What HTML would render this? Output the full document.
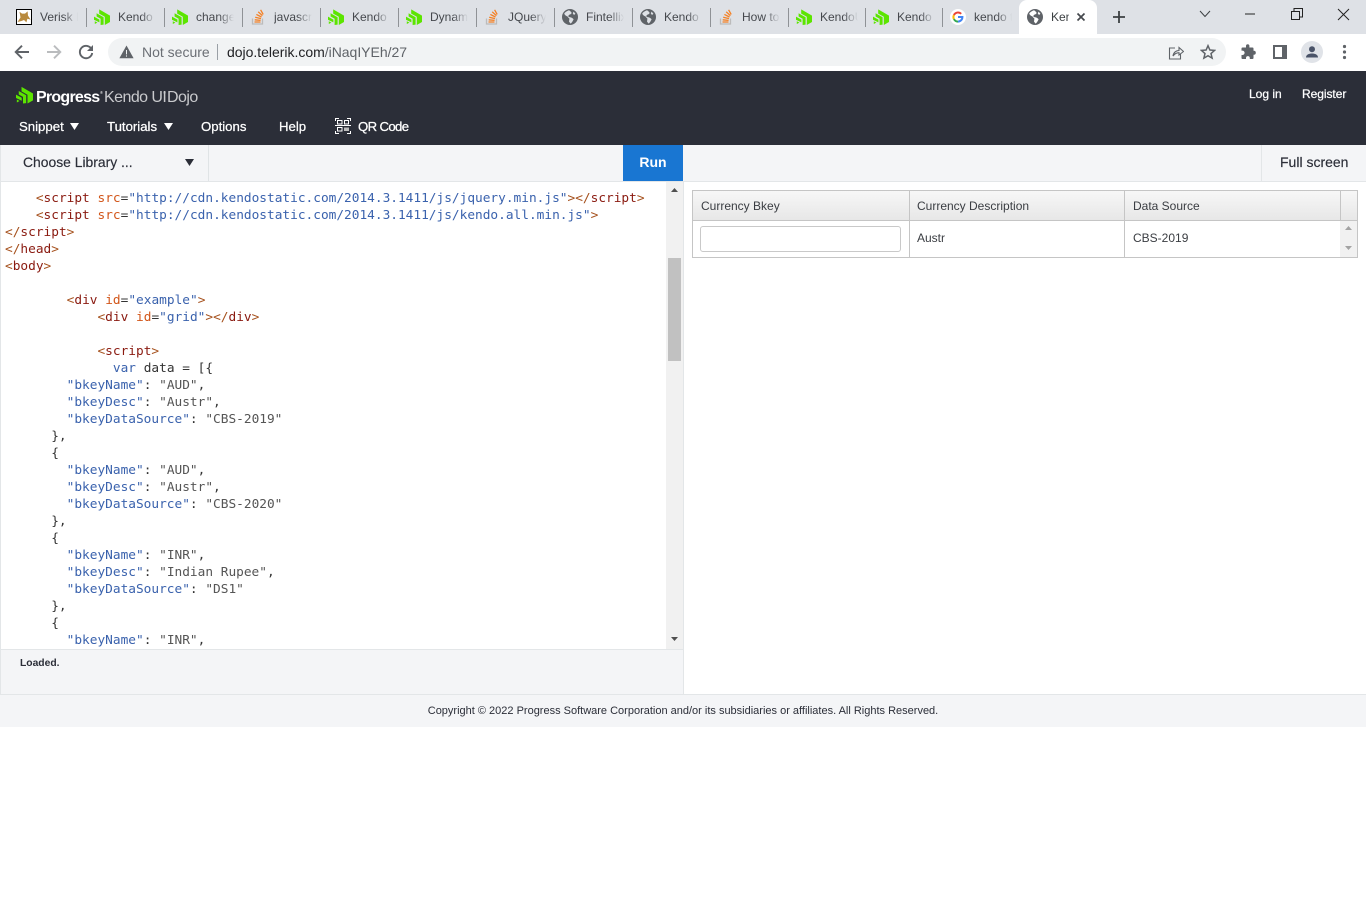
<!DOCTYPE html>
<html><head><meta charset="utf-8"><title>Kendo UI Dojo</title>
<style>
*{box-sizing:border-box}
html,body{margin:0;padding:0;width:1366px;height:900px;overflow:hidden;background:#fff;font-family:"Liberation Sans",Arial,sans-serif}
.a{position:absolute;white-space:nowrap}
.tab{position:absolute;top:0;height:34px;width:78px}
.tab svg{position:absolute;left:8px;top:9px;width:16px;height:16px}
.tab span{position:absolute;left:32px;top:9px;width:38px;overflow:hidden;font-size:12px;line-height:16px;color:#45484d;white-space:nowrap;-webkit-mask-image:linear-gradient(90deg,#000 60%,transparent);mask-image:linear-gradient(90deg,#000 60%,transparent)}
.sep{position:absolute;top:8px;width:1px;height:19px;background:#8f9296}
.nav{position:absolute;top:119px;font-size:13.2px;line-height:16px;color:#fff;-webkit-text-stroke:.25px #fff;white-space:nowrap}
.code{position:absolute;left:5px;top:190px;font:12.8px/17px "DejaVu Sans Mono","Liberation Mono",monospace;white-space:pre;color:#333;margin:0}
.t{color:#8a1a10}.b{color:#a5501c}.at{color:#d2561a}.s{color:#3a62ad}.v{color:#555}
.cell{position:absolute;font-size:12px;line-height:14px;color:#3a3d42;white-space:nowrap}
</style></head><body>
<svg width="0" height="0" style="position:absolute">
<symbol id="pg" viewBox="0 0 16 16"><path fill="#5ce500" d="M5.2 0.4 16 6.6V13L10.8 16V7.8L5.2 4.6Z M2.6 4.2 9.6 8.2V15.6L6.6 16V9.8L2.6 7.5Z M0 7.6 5.4 10.6V13.4L0 10.8Z M0.8 12.2 3.4 13.6 0.8 15Z"/></symbol>
<symbol id="so" viewBox="0 0 16 16"><path fill="none" stroke="#bcbbbb" stroke-width="1.3" d="M2.5 9.5V15H12.5V9.5"/><path fill="none" stroke="#f48024" stroke-width="1.3" d="M4.5 13H10.5M4.7 10.8 10.6 11.4M5.2 8.2 11 9.6M6.4 5.4 11.5 8M8.2 2.8 12.4 6.6M10.6 .8 13.2 5.4"/></symbol>
<symbol id="gl" viewBox="0 0 16 16"><circle cx="8" cy="8" r="8" fill="#5f6368"/><path fill="#dee1e6" d="M7 1.2C5 2 3.2 3 2.2 4.6 2.8 6 4 7 5.4 7.4 6.2 8.6 6.8 9 7.4 9.6L7 12.6 8.6 14.6C10 13.8 10.8 11.8 11.6 10.4 10.8 8.8 8.4 8.2 6.8 8 6 7 6.6 6 7.6 5.6 8.4 5.4 9.6 5 9.6 3.8 9 2.6 8 1.8 7 1.2Z"/><path fill="#dee1e6" d="M11.6 2.6 13.4 4.8 12 6 10.8 4.4Z"/></symbol>
</svg>

<!-- tab strip -->
<div class="a" style="left:0;top:0;width:1366px;height:34px;background:#dee1e6"></div>
<div class="tab" style="left:8px"><svg viewBox="0 0 16 16"><rect x=".5" y=".5" width="15" height="15" fill="#fff" stroke="#000"/><path fill="#b98a3e" d="M1.5 13 4.5 8.5 3.5 2.8 6 4.6 9 4.6 11.6 2.4 12 6.6 14.6 10.6 11.4 9.8 10.4 13.4 8 11 5.5 12Z"/></svg><span>Verisk F</span></div>
<div class="sep" style="left:86px"></div>
<div class="tab" style="left:86px"><svg viewBox="0 0 16 16"><use href="#pg"/></svg><span>Kendo U</span></div>
<div class="sep" style="left:164px"></div>
<div class="tab" style="left:164px"><svg viewBox="0 0 16 16"><use href="#pg"/></svg><span>change</span></div>
<div class="sep" style="left:242px"></div>
<div class="tab" style="left:242px"><svg viewBox="0 0 16 16"><use href="#so"/></svg><span>javascri</span></div>
<div class="sep" style="left:320px"></div>
<div class="tab" style="left:320px"><svg viewBox="0 0 16 16"><use href="#pg"/></svg><span>Kendo U</span></div>
<div class="sep" style="left:398px"></div>
<div class="tab" style="left:398px"><svg viewBox="0 0 16 16"><use href="#pg"/></svg><span>Dynam</span></div>
<div class="sep" style="left:476px"></div>
<div class="tab" style="left:476px"><svg viewBox="0 0 16 16"><use href="#so"/></svg><span>JQuery</span></div>
<div class="sep" style="left:554px"></div>
<div class="tab" style="left:554px"><svg viewBox="0 0 16 16"><use href="#gl"/></svg><span>Fintellix</span></div>
<div class="sep" style="left:632px"></div>
<div class="tab" style="left:632px"><svg viewBox="0 0 16 16"><use href="#gl"/></svg><span>Kendo U</span></div>
<div class="sep" style="left:710px"></div>
<div class="tab" style="left:710px"><svg viewBox="0 0 16 16"><use href="#so"/></svg><span>How to</span></div>
<div class="sep" style="left:788px"></div>
<div class="tab" style="left:788px"><svg viewBox="0 0 16 16"><use href="#pg"/></svg><span>KendoU</span></div>
<div class="sep" style="left:865px"></div>
<div class="tab" style="left:865px"><svg viewBox="0 0 16 16"><use href="#pg"/></svg><span>Kendo U</span></div>
<div class="sep" style="left:942px"></div>
<div class="tab" style="left:942px"><svg viewBox="0 0 16 16"><circle cx="8" cy="8" r="8" fill="#fff"/><path fill="none" stroke="#4285f4" stroke-width="2" d="M8 8H12.4A4.5 4.5 0 0 1 8 12.6"/><path fill="none" stroke="#34a853" stroke-width="2" d="M8 12.6A4.6 4.6 0 0 1 3.9 10"/><path fill="none" stroke="#fbbc05" stroke-width="2" d="M3.9 10A4.6 4.6 0 0 1 3.9 6"/><path fill="none" stroke="#ea4335" stroke-width="2" d="M3.9 6A4.6 4.6 0 0 1 11.2 4.8"/></svg><span>kendo t</span></div>

<!-- active tab -->
<div class="a" style="left:1019px;top:0;width:78px;height:34px;background:#fff;border-radius:8px 8px 0 0"></div>
<svg class="a" style="left:1027px;top:9px" width="16" height="16" viewBox="0 0 16 16"><circle cx="8" cy="8" r="8" fill="#5f6368"/><path fill="#fff" d="M7 1.2C5 2 3.2 3 2.2 4.6 2.8 6 4 7 5.4 7.4 6.2 8.6 6.8 9 7.4 9.6L7 12.6 8.6 14.6C10 13.8 10.8 11.8 11.6 10.4 10.8 8.8 8.4 8.2 6.8 8 6 7 6.6 6 7.6 5.6 8.4 5.4 9.6 5 9.6 3.8 9 2.6 8 1.8 7 1.2Z"/><path fill="#fff" d="M11.6 2.6 13.4 4.8 12 6 10.8 4.4Z"/></svg>
<div class="a" style="left:1051px;top:9px;width:18px;overflow:hidden;font-size:12px;line-height:16px;color:#3c4043">Kendo</div>
<svg class="a" style="left:1076px;top:12px" width="10" height="10" viewBox="0 0 10 10"><path d="M1.5 1.5 8.5 8.5M8.5 1.5 1.5 8.5" stroke="#45484d" stroke-width="1.7" fill="none"/></svg>
<svg class="a" style="left:1112px;top:10px" width="14" height="14" viewBox="0 0 14 14"><path d="M7 1V13M1 7H13" stroke="#3c4043" stroke-width="1.8" fill="none"/></svg>
<svg class="a" style="left:1199px;top:9px" width="12" height="10" viewBox="0 0 12 10"><path d="M1 2 6 7.5 11 2" stroke="#3c4043" stroke-width="1" fill="none"/></svg>
<svg class="a" style="left:1244px;top:9px" width="12" height="10" viewBox="0 0 12 10"><path d="M1 5H11" stroke="#222" stroke-width="1"/></svg>
<svg class="a" style="left:1291px;top:8px" width="12" height="12" viewBox="0 0 12 12"><path d="M.5 3.5H8.5V11.5H.5ZM3 3.5V.5H11.5V9H8.5" stroke="#222" fill="none"/></svg>
<svg class="a" style="left:1337px;top:8px" width="13" height="13" viewBox="0 0 13 13"><path d="M1 1 12 12M12 1 1 12" stroke="#222" fill="none"/></svg>

<!-- toolbar -->
<div class="a" style="left:0;top:34px;width:1366px;height:37px;background:#fff"></div>
<svg class="a" style="left:14px;top:44px" width="16" height="16" viewBox="0 0 16 16"><path d="M15 8H2M8 1.7 1.7 8 8 14.3" stroke="#5f6368" stroke-width="1.9" fill="none"/></svg>
<svg class="a" style="left:46px;top:44px" width="16" height="16" viewBox="0 0 16 16"><path d="M1 8H14M8 1.7 14.3 8 8 14.3" stroke="#babcbe" stroke-width="1.9" fill="none"/></svg>
<svg class="a" style="left:78px;top:44px" width="16" height="16" viewBox="0 0 16 16"><path d="M13.6 5.2A6.2 6.2 0 1 0 14.2 9" stroke="#5f6368" stroke-width="1.9" fill="none"/><path d="M15 1V7H9Z" fill="#5f6368"/></svg>
<div class="a" style="left:108px;top:38px;width:1118px;height:28px;background:#f1f3f4;border-radius:14px"></div>
<svg class="a" style="left:119px;top:45px" width="15" height="14" viewBox="0 0 15 14"><path d="M7.5 .5 14.6 13.2H.4Z" fill="#5f6368"/><path d="M7 5H8V9.4H7ZM7 10.4H8V11.6H7Z" fill="#f1f3f4"/></svg>
<div class="a" style="left:142px;top:44px;font-size:14px;line-height:17px;color:#6b6f75">Not secure</div>
<div class="a" style="left:217px;top:44px;width:1px;height:16px;background:#9aa0a6"></div>
<div class="a" style="left:227px;top:44px;font-size:14px;line-height:17px;color:#202124;letter-spacing:-.02px">dojo.telerik.com<span style="color:#5f6368">/iNaqIYEh/27</span></div>
<svg class="a" style="left:1168px;top:44px" width="16" height="16" viewBox="0 0 16 16"><path d="M7 4H1.5V15H12.5V10" stroke="#5f6368" fill="none" stroke-width="1.1"/><path d="M5 12C5.5 8.5 8 6.5 11 6.5V3.5L15.5 7.5 11 11V8.7C8.5 8.7 6.5 10 5 12Z" stroke="#5f6368" fill="none" stroke-width="1.1"/></svg>
<svg class="a" style="left:1200px;top:44px" width="16" height="16" viewBox="0 0 16 16"><path d="M8 1.7 9.9 6 14.6 6.4 11 9.5 12.1 14.1 8 11.7 3.9 14.1 5 9.5 1.4 6.4 6.1 6Z" stroke="#5f6368" stroke-width="1.5" fill="none"/></svg>
<svg class="a" style="left:1240px;top:44px" width="16" height="16" viewBox="0 0 16 16"><path d="M6 1.5A1.8 1.8 0 0 1 9.4 1.5V3.5H12.5A1 1 0 0 1 13.5 4.5V6.8H13.8A2 2 0 0 1 13.8 10.8H13.5V14A1 1 0 0 1 12.5 15H9.8V14A1.9 1.9 0 0 0 6 14V15H2.5A1 1 0 0 1 1.5 14V11H2.4A2.2 2.2 0 0 0 2.4 6.6H1.5V4.5A1 1 0 0 1 2.5 3.5H6Z" fill="#5f6368"/></svg>
<svg class="a" style="left:1273px;top:45px" width="14" height="14" viewBox="0 0 14 14"><path d="M0 0H14V14H0ZM2 2V12H9V2Z" fill="#5f6368" fill-rule="evenodd"/></svg>
<div class="a" style="left:1301px;top:41px;width:22px;height:22px;border-radius:50%;background:#e0e3e8"></div>
<svg class="a" style="left:1301px;top:41px" width="22" height="22" viewBox="0 0 22 22"><circle cx="11" cy="8.2" r="3" fill="#4a5368"/><path d="M5 16.5C5 13.6 8 12.5 11 12.5S17 13.6 17 16.5Z" fill="#4a5368"/></svg>
<svg class="a" style="left:1342px;top:44px" width="5" height="16" viewBox="0 0 5 16"><circle cx="2.5" cy="2.5" r="1.6" fill="#5f6368"/><circle cx="2.5" cy="8" r="1.6" fill="#5f6368"/><circle cx="2.5" cy="13.5" r="1.6" fill="#5f6368"/></svg>

<!-- dark header -->
<div class="a" style="left:0;top:71px;width:1366px;height:74px;background:#2b2e38"></div>
<svg class="a" style="left:16px;top:86px" width="17" height="18" viewBox="0 0 16 16.5"><use href="#pg"/></svg>
<div class="a" style="left:36px;top:88px;font-size:16px;line-height:20px;color:#fff;font-weight:bold;letter-spacing:-.75px">Progress</div>
<div class="a" style="left:100px;top:90px;font-size:4px;line-height:5px;color:#fff">®</div>
<div class="a" style="left:104px;top:88px;font-size:16px;line-height:20px;color:#c9cacd;letter-spacing:-.55px">Kendo UI</div>
<div class="a" style="left:163px;top:90px;font-size:4px;line-height:5px;color:#c9cacd">®</div>
<div class="a" style="left:167px;top:88px;font-size:16px;line-height:20px;color:#c9cacd;letter-spacing:-.55px">Dojo</div>
<div class="nav" style="left:1249px;top:86px;font-size:12px">Log in</div>
<div class="nav" style="left:1302px;top:86px;font-size:12px;letter-spacing:-.05px">Register</div>
<div class="nav" style="left:19px">Snippet</div>
<svg class="a" style="left:70px;top:123px" width="9" height="7"><path d="M0 0H9L4.5 7Z" fill="#fff"/></svg>
<div class="nav" style="left:107px">Tutorials</div>
<svg class="a" style="left:164px;top:123px" width="9" height="7"><path d="M0 0H9L4.5 7Z" fill="#fff"/></svg>
<div class="nav" style="left:201px">Options</div>
<div class="nav" style="left:279px">Help</div>
<svg class="a" style="left:335px;top:118px" width="16" height="16" viewBox="0 0 16 16"><path d="M.5 3V.5H4M12 .5H15.5V3M.5 13V15.5H4M12 15.5H15.5V13" stroke="#fff" fill="none"/><path d="M0 7.5H16" stroke="#fff"/><path d="M2.5 2.5H7V6H2.5ZM9.5 2.5H13.5V6H9.5ZM2.5 9.5H7V13H2.5Z" stroke="#fff" fill="none"/><path d="M9 9.5H14V13H9Z" fill="#bbb"/></svg>
<div class="nav" style="left:358px;letter-spacing:-.65px">QR Code</div>

<!-- action bar -->
<div class="a" style="left:0;top:145px;width:1366px;height:37px;background:#f4f5f7;border-bottom:1px solid #e3e6e8"></div>
<div class="a" style="left:0;top:145px;width:1px;height:36px;background:#e3e6e8"></div>
<div class="a" style="left:208px;top:145px;width:1px;height:36px;background:#e0e4e6"></div>
<div class="a" style="left:23px;top:154px;font-size:13.9px;line-height:17px;color:#2b2e38;-webkit-text-stroke:.15px #2b2e38">Choose Library ...</div>
<svg class="a" style="left:185px;top:159px" width="9" height="7"><path d="M0 0H9L4.5 7Z" fill="#2b2e38"/></svg>
<div class="a" style="left:623px;top:145px;width:60px;height:36px;background:#1976d2;color:#fff;font-size:14px;font-weight:bold;line-height:35px;text-align:center">Run</div>
<div class="a" style="left:1261px;top:145px;width:1px;height:36px;background:#e3e6e8"></div>
<div class="a" style="left:1280px;top:154px;font-size:14px;line-height:17px;color:#2b2e38;-webkit-text-stroke:.15px #2b2e38">Full screen</div>

<!-- editor -->
<div class="a" style="left:0;top:181px;width:1px;height:514px;background:#e3e6e8"></div>
<pre class="code"><span class="b">    &lt;</span><span class="t">script</span> <span class="at">src</span>=<span class="s">"http://cdn.kendostatic.com/2014.3.1411/js/jquery.min.js"</span><span class="b">&gt;&lt;/</span><span class="t">script</span><span class="b">&gt;</span>
<span class="b">    &lt;</span><span class="t">script</span> <span class="at">src</span>=<span class="s">"http://cdn.kendostatic.com/2014.3.1411/js/kendo.all.min.js"</span><span class="b">&gt;</span>
<span class="b">&lt;/</span><span class="t">script</span><span class="b">&gt;</span>
<span class="b">&lt;/</span><span class="t">head</span><span class="b">&gt;</span>
<span class="b">&lt;</span><span class="t">body</span><span class="b">&gt;</span>

        <span class="b">&lt;</span><span class="t">div</span> <span class="at">id</span>=<span class="s">"example"</span><span class="b">&gt;</span>
            <span class="b">&lt;</span><span class="t">div</span> <span class="at">id</span>=<span class="s">"grid"</span><span class="b">&gt;&lt;/</span><span class="t">div</span><span class="b">&gt;</span>

            <span class="b">&lt;</span><span class="t">script</span><span class="b">&gt;</span>
              <span class="s">var</span> data = [{
        <span class="s">"bkeyName"</span>: <span class="v">"AUD"</span>,
        <span class="s">"bkeyDesc"</span>: <span class="v">"Austr"</span>,
        <span class="s">"bkeyDataSource"</span>: <span class="v">"CBS-2019"</span>
      },
      {
        <span class="s">"bkeyName"</span>: <span class="v">"AUD"</span>,
        <span class="s">"bkeyDesc"</span>: <span class="v">"Austr"</span>,
        <span class="s">"bkeyDataSource"</span>: <span class="v">"CBS-2020"</span>
      },
      {
        <span class="s">"bkeyName"</span>: <span class="v">"INR"</span>,
        <span class="s">"bkeyDesc"</span>: <span class="v">"Indian Rupee"</span>,
        <span class="s">"bkeyDataSource"</span>: <span class="v">"DS1"</span>
      },
      {
        <span class="s">"bkeyName"</span>: <span class="v">"INR"</span>,</pre>
<div class="a" style="left:666px;top:182px;width:17px;height:468px;background:#f1f1f1"></div>
<div class="a" style="left:668px;top:258px;width:13px;height:103px;background:#c1c1c1"></div>
<svg class="a" style="left:671px;top:188px" width="7" height="5"><path d="M3.5 0 7 4H0Z" fill="#505050"/></svg>
<svg class="a" style="left:671px;top:637px" width="7" height="5"><path d="M0 0H7L3.5 4Z" fill="#505050"/></svg>
<div class="a" style="left:683px;top:181px;width:1px;height:514px;background:#e3e6e8"></div>

<!-- status -->
<div class="a" style="left:1px;top:649px;width:682px;height:46px;background:#f4f5f7;border-top:1px solid #e3e6e8"></div>
<div class="a" style="left:20px;top:657px;font-size:10.3px;line-height:14px;font-weight:bold;color:#2b2e38">Loaded.</div>

<!-- grid -->
<div class="a" style="left:692px;top:190px;width:666px;height:68px;border:1px solid #c5c5c5;background:#fff"></div>
<div class="a" style="left:693px;top:191px;width:664px;height:30px;background:linear-gradient(#f7f7f7,#e7e7e7);border-bottom:1px solid #c5c5c5"></div>
<div class="a" style="left:909px;top:191px;width:1px;height:66px;background:#c5c5c5"></div>
<div class="a" style="left:1124px;top:191px;width:1px;height:66px;background:#c5c5c5"></div>
<div class="a" style="left:1340px;top:191px;width:1px;height:30px;background:#c5c5c5"></div>
<div class="cell" style="left:701px;top:199px">Currency Bkey</div>
<div class="cell" style="left:917px;top:199px">Currency Description</div>
<div class="cell" style="left:1133px;top:199px">Data Source</div>
<div class="a" style="left:700px;top:226px;width:201px;height:26px;border:1px solid #c9c9c9;border-radius:3px;background:#fff"></div>
<div class="cell" style="left:917px;top:231px">Austr</div>
<div class="cell" style="left:1133px;top:231px">CBS-2019</div>
<div class="a" style="left:1340px;top:221px;width:17px;height:36px;background:#f1f1f1"></div>
<svg class="a" style="left:1345px;top:226px" width="7" height="5"><path d="M3.5 0 7 4H0Z" fill="#a3a3a3"/></svg>
<svg class="a" style="left:1345px;top:246px" width="7" height="5"><path d="M0 0H7L3.5 4Z" fill="#a3a3a3"/></svg>

<!-- footer -->
<div class="a" style="left:0;top:694px;width:1366px;height:33px;background:#f4f5f7;border-top:1px solid #e3e6e8"></div>
<div class="a" style="left:0;top:704px;width:1366px;text-align:center;font-size:11px;line-height:14px;color:#2b2e38">Copyright © 2022 Progress Software Corporation and/or its subsidiaries or affiliates. All Rights Reserved.</div>
</body></html>
